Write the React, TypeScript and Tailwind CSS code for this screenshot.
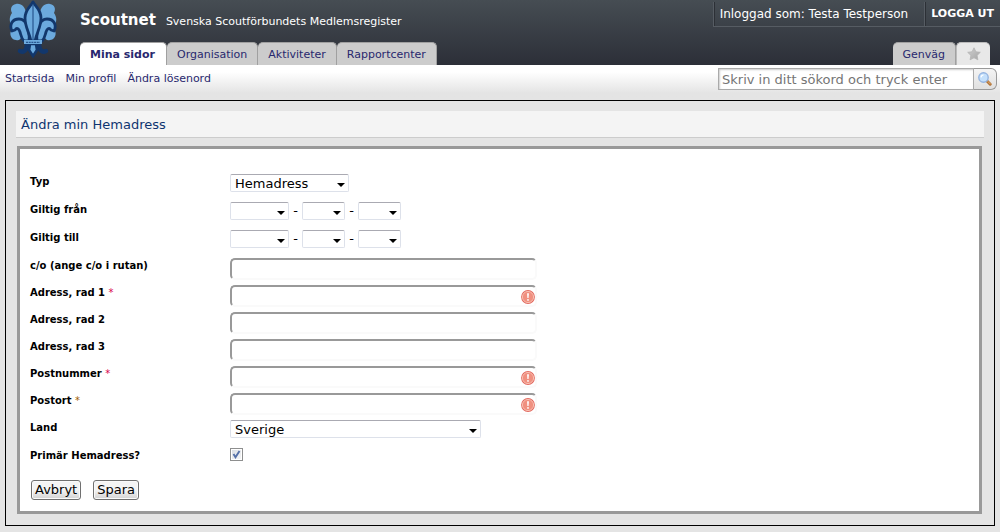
import React from 'react';

type Field = {
  id: string;
  label: string;
  required?: boolean;
  starColor?: string;
};

const TABS = ['Mina sidor', 'Organisation', 'Aktiviteter', 'Rapportcenter'];
const SUB_LINKS = ['Startsida', 'Min profil', 'Ändra lösenord'];

const FIELDS: Field[] = [
  { id: 'co', label: 'c/o (ange c/o i rutan)' },
  { id: 'address1', label: 'Adress, rad 1', required: true, starColor: 'text-[#d8004c]' },
  { id: 'address2', label: 'Adress, rad 2' },
  { id: 'address3', label: 'Adress, rad 3' },
  { id: 'zip', label: 'Postnummer', required: true, starColor: 'text-[#d8004c]' },
  { id: 'city', label: 'Postort', required: true, starColor: 'text-[#a05a00]' },
];

function Logo() {
  return (
    <svg viewBox="0 0 48 58" className="h-[58px] w-12" aria-hidden="true">
      <g fill="#6caade">
        <path d="M17 14C17 7 12 3 7 4C2 5 1 9 3 13C0 17 0 22 3 26L2 31C0 35 3 40 7 40C10 41 12 39 13 36L20 40Z" />
        <path d="M31 14C31 7 36 3 41 4C46 5 47 9 45 13C48 17 48 22 45 26L46 31C48 35 45 40 41 40C38 41 36 39 35 36L28 40Z" />
      </g>
      <g fill="#6caade" stroke="#12376c" strokeWidth="2.8" strokeLinejoin="round">
        <path d="M20 41C21 30 18 19 10 19C3 19 0 25 3 31L6 30C8 27 10 29 11 32C12 35 12 38 15 41Z" />
        <path d="M28 41C27 30 30 19 38 19C45 19 48 25 45 31L42 30C40 27 38 29 37 32C36 35 36 38 33 41Z" />
        <path d="M24 2C22 6 16 10 16 18C16 27 20 32 22 41H26C28 32 32 27 32 18C32 10 26 6 24 2Z" />
      </g>
      <path d="M24 4V41" stroke="#28568f" strokeWidth="1.2" />
      <path d="M18 44C18 50 15 53 11 51M30 44C30 50 33 53 37 51" fill="none" stroke="#12376c" strokeWidth="4.5" strokeLinecap="round" />
      <path d="M21 44L20 50L24 56L28 50L27 44Z" fill="#6caade" stroke="#12376c" strokeWidth="2.6" />
      <rect x="15" y="40" width="18" height="4" fill="#6caade" />
      <path d="M17 42.3H31" stroke="#28568f" strokeWidth="1.2" strokeDasharray="2 .7" />
    </svg>
  );
}

function StarIcon() {
  return (
    <svg viewBox="0 0 14 14" className="size-3.5" aria-hidden="true">
      <defs>
        <linearGradient id="star" x1="0" x2="1" y1="0" y2="1">
          <stop offset="0" stopColor="#d0d0d0" />
          <stop offset="1" stopColor="#a4a4a4" />
        </linearGradient>
      </defs>
      <path
        d="M7 .8L8.9 4.8L13.3 5.3L10.1 8.4L10.9 12.8L7 10.8L3.1 12.8L3.9 8.4L.7 5.3L5.1 4.8Z"
        fill="url(#star)"
        stroke="#b4b4b4"
        strokeWidth=".8"
        strokeLinejoin="round"
      />
    </svg>
  );
}

function SearchIcon() {
  return (
    <svg viewBox="0 0 14 14" className="size-3.5" aria-hidden="true">
      <path d="M9 9L12.2 12.2" stroke="#b0743a" strokeWidth="3" strokeLinecap="round" />
      <path d="M10 9.6L12.4 12" stroke="#e9b070" strokeWidth="1" strokeLinecap="round" />
      <circle cx="5.5" cy="5.5" r="4.7" fill="#c4e0fb" stroke="#94b4e0" strokeWidth="1.4" />
      <path d="M3 5.4A2.6 2.6 0 0 1 5.6 3" fill="none" stroke="#fff" strokeWidth="1.2" />
    </svg>
  );
}

function ErrorIcon() {
  return (
    <svg viewBox="0 0 14 14" className="pointer-events-none absolute top-[5px] right-0.5 size-3.5" aria-hidden="true">
      <circle cx="7" cy="7" r="6.9" fill="#e2695f" />
      <circle cx="7" cy="7" r="5.6" fill="#f09080" stroke="#f9c6b8" strokeWidth=".9" />
      <path d="M6.1 3.2H7.9L7.6 8H6.4Z" fill="#fff" />
      <circle cx="7" cy="9.9" r=".9" fill="#fff" />
    </svg>
  );
}

function Select({ id, label, width, options }: { id: string; label?: string; width: string; options: string[] }) {
  return (
    <div className={`relative h-[18px] ${width}`}>
      <select
        id={id}
        aria-label={label}
        className="block h-[18px] w-full appearance-none rounded-xs border border-[#dde1ea] border-t-[#aaaab2] bg-white pt-px pl-1 text-[13px] leading-4 text-black"
      >
        {options.map((o) => (
          <option key={o}>{o}</option>
        ))}
      </select>
      <svg viewBox="0 0 8 4" className="pointer-events-none absolute top-[9px] right-1 h-1 w-2" aria-hidden="true">
        <path d="M0 0H8L4 4Z" fill="#000" />
      </svg>
    </div>
  );
}

function DateSelects({ id }: { id: string }) {
  return (
    <div className="flex items-center text-[13px] leading-[18px]">
      <Select id={id} width="w-[59px]" options={['']} />
      <span className="w-[13px] text-center">-</span>
      <Select id={`${id}-month`} label="Månad" width="w-[43px]" options={['']} />
      <span className="w-[13px] text-center">-</span>
      <Select id={`${id}-day`} label="Dag" width="w-[43px]" options={['']} />
    </div>
  );
}

function Row({ id, label, height, children }: { id: string; label: React.ReactNode; height: string; children: React.ReactNode }) {
  return (
    <div className={`flex items-start ${height}`}>
      <label htmlFor={id} className="w-[200px] shrink-0 text-[10px] leading-4 font-bold">
        {label}
      </label>
      {children}
    </div>
  );
}

export default function App() {
  return (
    <div className="min-h-screen bg-[#e4e4e4] pb-1.5 font-['Verdana','DejaVu_Sans',sans-serif] text-[11px] text-black">
      <header className="flex h-[65px] bg-linear-to-b from-[#464d53] to-[#2c2f38]">
        <div className="w-20 shrink-0 pl-[9px]">
          <Logo />
        </div>
        <div className="flex grow flex-col justify-between">
          <div className="flex items-baseline gap-2.5 pt-2.5 text-white">
            <h1 className="text-[15px] leading-5 font-bold">Scoutnet</h1>
            <p className="text-[11px]">Svenska Scoutförbundets Medlemsregister</p>
          </div>
          <nav className="flex leading-6">
            {TABS.map((tab, i) => (
              <a
                key={tab}
                href="#"
                className={`h-[23px] rounded-t-[5px] border-t border-r border-[#a0a0a0] text-[#28286e] ${
                  i === 0 ? 'bg-white pr-[11px] pl-2.5 font-bold' : 'bg-[#ccc] px-2.5'
                }`}
              >
                {tab}
              </a>
            ))}
          </nav>
        </div>
        <div className="flex flex-col items-end justify-between">
          <div className="mt-0.5 flex h-[25px] border-b border-l border-[#565c63] leading-6 text-white">
            <span className="border-l border-[#2c3036] pr-[17px] pl-[5px] text-[12px]">Inloggad som: Testa Testperson</span>
            <a href="#" className="border-l border-[#2c3036] pr-1.5 pl-[5px] font-bold shadow-[-1px_0_0_#565c63]">
              LOGGA UT
            </a>
          </div>
          <div className="mr-2.5 flex leading-6">
            <a href="#" className="h-[23px] rounded-t-[5px] border-t border-r border-[#a0a0a0] bg-[#ccc] px-2.5 text-[#28286e]">
              Genväg
            </a>
            <button
              type="button"
              aria-label="Lägg till genväg"
              className="flex h-[23px] w-[34px] items-center justify-center rounded-t-[5px] border-t border-l border-[#bbb] bg-[#e8e8e8]"
            >
              <StarIcon />
            </button>
          </div>
        </div>
      </header>

      <div className="flex h-[35px] items-start justify-between bg-linear-to-b from-white from-20% to-[#e4e4e4] to-80% pr-[3px] pl-[5px]">
        <nav className="flex gap-[11px] pt-1 leading-5 text-[#28286e]">
          {SUB_LINKS.map((link) => (
            <a key={link} href="#">
              {link}
            </a>
          ))}
        </nav>
        <form className="flex pt-[3px]">
          <input
            type="search"
            aria-label="Sök"
            placeholder="Skriv in ditt sökord och tryck enter"
            className="h-[22px] w-64 border border-[#aaa] bg-white px-[3px] text-[13px] shadow-[inset_1px_1px_2px_#ccc] placeholder:text-[#757575]"
          />
          <button
            type="button"
            aria-label="Sök"
            className="flex h-[22px] w-[23px] items-center justify-center rounded-r-md border border-l-0 border-[#999] bg-linear-to-b from-[#f4f4f4] to-[#e0e0e0]"
          >
            <SearchIcon />
          </button>
        </form>
      </div>

      <main className="mx-[5px] border border-black px-2.5 pt-2.5 pb-[11px]">
        <h2 className="border-b border-[#ccc] bg-[#f4f4f4] px-[5px] pt-0.5 text-[13px] leading-6 text-[#0f3470]">
          Ändra min Hemadress
        </h2>
        <form className="mt-2 mr-0.5 ml-px border-3 border-[#999] bg-white px-2.5 pt-[25px] pb-[11px]">
          <Row id="type" label="Typ" height="h-7">
            <Select id="type" width="w-[119px]" options={['Hemadress']} />
          </Row>
          <Row id="from" label="Giltig från" height="h-7">
            <DateSelects id="from" />
          </Row>
          <Row id="to" label="Giltig till" height="h-7">
            <DateSelects id="to" />
          </Row>
          {FIELDS.map((f) => (
            <Row
              key={f.id}
              id={f.id}
              height="h-[27px]"
              label={
                <>
                  {f.label} {f.required && <span className={`font-normal ${f.starColor}`}>*</span>}
                </>
              }
            >
              <div className="relative">
                <input
                  id={f.id}
                  type="text"
                  required={f.required}
                  className="block h-[22px] w-[307px] rounded-[5px] border-2 border-[#fafafa] border-t-[#999] border-l-[#999] bg-white px-1 text-[13px] shadow-none"
                />
                {f.required && <ErrorIcon />}
              </div>
            </Row>
          ))}
          <Row id="country" label="Land" height="h-7">
            <Select id="country" width="w-[251px]" options={['Sverige']} />
          </Row>
          <Row id="primary" label="Primär Hemadress?" height="h-8">
            <span className="relative block size-[13px]">
              <input
                id="primary"
                type="checkbox"
                defaultChecked
                className="peer block size-[13px] appearance-none border border-[#8e8f8f] bg-linear-to-br from-[#d8dce2] to-[#f8f8f8] shadow-[inset_0_0_0_1px_#fff]"
              />
              <svg viewBox="0 0 13 13" className="pointer-events-none absolute inset-0 hidden peer-checked:block" aria-hidden="true">
                <path d="M3.5 6L5.5 9.3L9.5 3" fill="none" stroke="#5570a8" strokeWidth="1.9" />
              </svg>
            </span>
          </Row>
          <div className="flex gap-3 pl-px text-[13px]">
            {['Avbryt', 'Spara'].map((text) => (
              <button
                key={text}
                type="button"
                className="h-5 rounded-[3px] border border-[#707070] bg-linear-to-b from-[#f4f4f4] from-50% to-[#d2d2d2] px-[3px] leading-[18px] shadow-[inset_0_0_0_1px_#fafafa]"
              >
                {text}
              </button>
            ))}
          </div>
        </form>
      </main>
    </div>
  );
}
